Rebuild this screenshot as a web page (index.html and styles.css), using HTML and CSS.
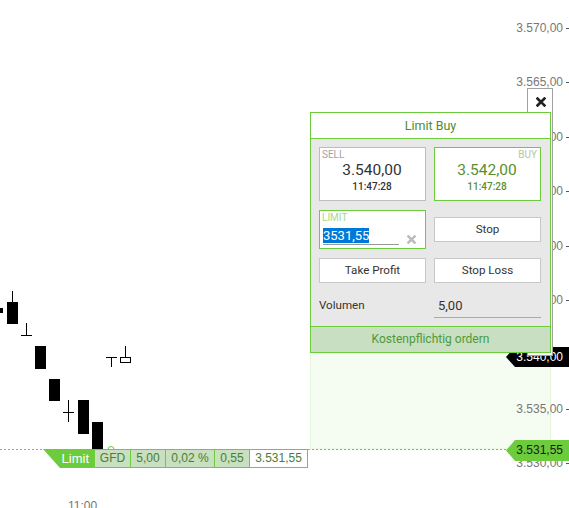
FILE: index.html
```html
<!DOCTYPE html>
<html>
<head>
<meta charset="utf-8">
<link rel="stylesheet" href="styles.css">
</head>
<body>
<div class="stage">
  <svg class="chart" width="569" height="508" viewBox="0 0 569 508">
    <rect x="310.5" y="353" width="240" height="96" fill="#f5fcf1" stroke="#e4f5da" stroke-width="1"/>
    <line x1="0" y1="449.5" x2="508" y2="449.5" stroke="#6ccc3c" stroke-width="1" stroke-dasharray="2 2"/>
    <g fill="#000" stroke="#000" stroke-width="1" shape-rendering="crispEdges">
      <rect x="0" y="308" width="3" height="5" stroke="none"/>
      <line x1="12.5" y1="291" x2="12.5" y2="302"/>
      <rect x="7" y="302" width="11" height="22" stroke="none"/>
      <line x1="26.5" y1="323" x2="26.5" y2="335"/>
      <line x1="21" y1="335.5" x2="32" y2="335.5"/>
      <rect x="35" y="346" width="11" height="23" stroke="none"/>
      <rect x="49" y="379" width="11" height="22" stroke="none"/>
      <line x1="68.5" y1="400" x2="68.5" y2="422"/>
      <line x1="63" y1="412.5" x2="74" y2="412.5"/>
      <rect x="78" y="400" width="11" height="34" stroke="none"/>
      <rect x="92" y="422" width="11" height="28" stroke="none"/>
      <line x1="106" y1="357.5" x2="117" y2="357.5"/>
      <line x1="111.5" y1="357" x2="111.5" y2="367"/>
      <line x1="125.5" y1="346" x2="125.5" y2="357"/>
      <rect x="120.5" y="357.5" width="10" height="5" fill="#fff"/>
    </g>
    <circle cx="111" cy="449.5" r="3" fill="#fff" stroke="#6ccc3c" stroke-width="1"/>
  </svg>

  <div class="axis">
    <div class="tick-label"><span>3.570,00</span><i></i></div>
    <div class="tick-label"><span>3.565,00</span><i></i></div>
    <div class="tick-label"><span>3.560,00</span><i></i></div>
    <div class="tick-label"><span>3.555,00</span><i></i></div>
    <div class="tick-label"><span>3.550,00</span><i></i></div>
    <div class="tick-label"><span>3.545,00</span><i></i></div>
    <div class="tick-label tick-covered"><span>3.540,00</span><i></i></div>
    <div class="tick-label"><span>3.535,00</span><i></i></div>
    <div class="tick-label"><span>3.530,00</span><i></i></div>
  </div>

  <div class="orderbar">
    <div class="ob-type">Limit</div>
    <div class="ob-cell">GFD</div>
    <div class="ob-cell">5,00</div>
    <div class="ob-cell">0,02 %</div>
    <div class="ob-cell">0,55</div>
    <div class="ob-cell ob-price">3.531,55</div>
  </div>

  <div class="tag tag-black">3.540,00</div>
  <div class="tag tag-green">3.531,55</div>
  <div class="time-label">11:00</div>

  <div class="frame">
    <svg class="close-icon" width="10" height="10" viewBox="0 0 10 10">
      <path d="M1.6 1.6 L8.4 8.4 M8.4 1.6 L1.6 8.4" stroke="#222" stroke-width="2.7" stroke-linecap="square"/>
    </svg>
  </div>

  <div class="panel">
    <div class="panel-head">Limit Buy</div>
    <div class="panel-body">
      <div class="quote quote-sell">
        <span class="q-label">SELL</span>
        <span class="q-price">3.540,00</span>
        <span class="q-time">11:47:28</span>
      </div>
      <div class="quote quote-buy">
        <span class="q-label">BUY</span>
        <span class="q-price">3.542,00</span>
        <span class="q-time">11:47:28</span>
      </div>
      <div class="limit">
        <span class="q-label">LIMIT</span>
        <div class="limit-row">
          <div class="limit-input"><span class="sel">3531,55</span></div>
          <svg class="clear-icon" width="9" height="9" viewBox="0 0 9 9">
            <path d="M1.4 1.4 L7.6 7.6 M7.6 1.4 L1.4 7.6" stroke="#bbbbbb" stroke-width="2.4" stroke-linecap="square"/>
          </svg>
        </div>
      </div>
      <div class="btn btn-stop">Stop</div>
      <div class="btn">Take Profit</div>
      <div class="btn">Stop Loss</div>
      <div class="vol-label">Volumen</div>
      <div class="vol-value">5,00</div>
    </div>
    <div class="panel-foot">Kostenpflichtig ordern</div>
  </div>
</div>
</body>
</html>
```

FILE: styles.css
```css
html, body {
  margin: 0;
  padding: 0;
  background: #fff;
}

.stage {
  position: relative;
  width: 569px;
  height: 508px;
  overflow: hidden;
  font-family: "Liberation Sans", Arial, sans-serif;
}

.chart {
  position: absolute;
  left: 0;
  top: 0;
}

/* price axis */
.axis {
  position: absolute;
  right: 0;
  top: 21px;
  width: 64px;
  display: grid;
  grid-auto-rows: 54.4px;
}

.tick-label {
  display: flex;
  justify-content: flex-end;
  align-items: flex-start;
  gap: 3px;
  font-size: 12px;
  line-height: 14px;
  height: 14px;
  color: #777;
}

.tick-label i {
  display: block;
  width: 3px;
  height: 1px;
  margin-top: 7px;
  background: #555;
}

.tick-covered span {
  visibility: hidden;
}

/* order bar */
.orderbar {
  position: absolute;
  left: 43px;
  top: 449px;
  height: 19px;
  display: grid;
  grid-template-columns: 52px 36px 35px 49px 35px 58px;
  font-size: 12px;
}

.ob-type {
  background: #6ccc3c;
  color: #fff;
  font-size: 13px;
  line-height: 19px;
  text-align: right;
  padding-right: 6px;
  clip-path: polygon(0 0, 100% 0, 100% 100%, 17px 100%);
}

.ob-cell {
  background: #c8dfc0;
  color: #4b7d35;
  border-top: 1px solid #6ccc3c;
  border-bottom: 1px solid #6ccc3c;
  border-right: 1px solid #6ccc3c;
  line-height: 17px;
  text-align: center;
}

.ob-price {
  background: #fff;
}

/* price tags */
.tag {
  position: absolute;
  left: 506px;
  width: 63px;
  box-sizing: border-box;
  padding-right: 6px;
  text-align: right;
  font-size: 12px;
  clip-path: polygon(9px 0, 100% 0, 100% 100%, 9px 100%, 0 50%);
}

.tag-black {
  top: 347px;
  height: 20px;
  line-height: 20px;
  background: #000;
  color: #fff;
}

.tag-green {
  top: 440px;
  height: 21px;
  line-height: 21px;
  background: #6ccc3c;
  color: #1a1a1a;
}

.time-label {
  position: absolute;
  left: 68px;
  top: 499px;
  font-size: 12px;
  line-height: 14px;
  color: #777;
}

/* popup frame with close */
.frame {
  position: absolute;
  left: 527px;
  top: 88px;
  width: 26px;
  height: 268px;
  box-sizing: border-box;
  border: 1px solid #a0a0a0;
  background: #fff;
  display: flex;
  justify-content: center;
  align-items: flex-start;
  padding: 8px 0 0 2px;
}

.close-icon {
  display: block;
}

/* order panel */
.panel {
  position: absolute;
  left: 310px;
  top: 112px;
  width: 241px;
  box-sizing: border-box;
  border: 1px solid #6ccc3c;
  font-family: Roboto, "Noto Sans", sans-serif;
  color: #333;
}

.panel-head {
  height: 25px;
  line-height: 25px;
  text-align: center;
  background: #fff;
  color: #4e8c2e;
  font-size: 12.5px;
  border-bottom: 1px solid #6ccc3c;
}

.panel-body {
  background: #e8e8e8;
  padding: 8px 9px 8px 8px;
  display: grid;
  grid-template-columns: 107px 107px;
  grid-template-rows: 54px 39px 25px 26px;
  column-gap: 8px;
  row-gap: 9px;
}

.quote {
  box-sizing: border-box;
  background: #fff;
  border: 1px solid #bdbdbd;
  display: flex;
  flex-direction: column;
  align-items: center;
  padding: 1px 3px 0 2px;
}

.quote-buy {
  border-color: #6ccc3c;
}

.q-label {
  font-size: 10px;
  line-height: 12px;
  color: #a3a3a3;
}

.quote-sell .q-label {
  align-self: flex-start;
}

.quote-buy .q-label {
  align-self: flex-end;
  color: #b7c69a;
}

.q-price {
  font-size: 15.5px;
  line-height: 19px;
  color: #333;
}

.q-time {
  font-size: 10px;
  line-height: 12px;
  margin-top: 1px;
  font-weight: 500;
  color: #333;
}

.quote-buy .q-price,
.quote-buy .q-time {
  color: #5a8f2e;
}

.limit {
  box-sizing: border-box;
  background: #fff;
  border: 1px solid #6ccc3c;
  padding: 1px 2px 0 2px;
  display: flex;
  flex-direction: column;
}

.limit .q-label {
  color: #a6d98e;
}

.limit-row {
  display: flex;
  align-items: flex-end;
  margin-top: 4px;
  margin-left: 1px;
}

.limit-input {
  width: 76px;
  border-bottom: 1px solid #9a9a9a;
  padding-bottom: 1px;
  font-size: 13px;
  line-height: 15px;
  height: 15px;
}

.sel {
  background: #0078d7;
  color: #fff;
  display: inline-block;
}

.clear-icon {
  display: block;
  margin-left: 8px;
  margin-bottom: 1px;
}

.btn {
  box-sizing: border-box;
  background: #fff;
  border: 1px solid #c8c8c8;
  font-size: 11.6px;
  line-height: 23px;
  text-align: center;
  color: #333;
}

.btn-stop {
  align-self: center;
  height: 25px;
}

.vol-label {
  font-size: 11.6px;
  line-height: 14px;
  padding-top: 6px;
  color: #333;
}

.vol-value {
  box-sizing: border-box;
  height: 26px;
  border-bottom: 1px solid #aaa;
  font-size: 13px;
  line-height: 16px;
  padding-top: 6px;
  padding-left: 4px;
  color: #333;
}

.panel-foot {
  height: 25px;
  line-height: 25px;
  background: #c8dfc2;
  border-top: 1px solid #6ccc3c;
  text-align: center;
  color: #4e9a3a;
  font-size: 12px;
}
```
